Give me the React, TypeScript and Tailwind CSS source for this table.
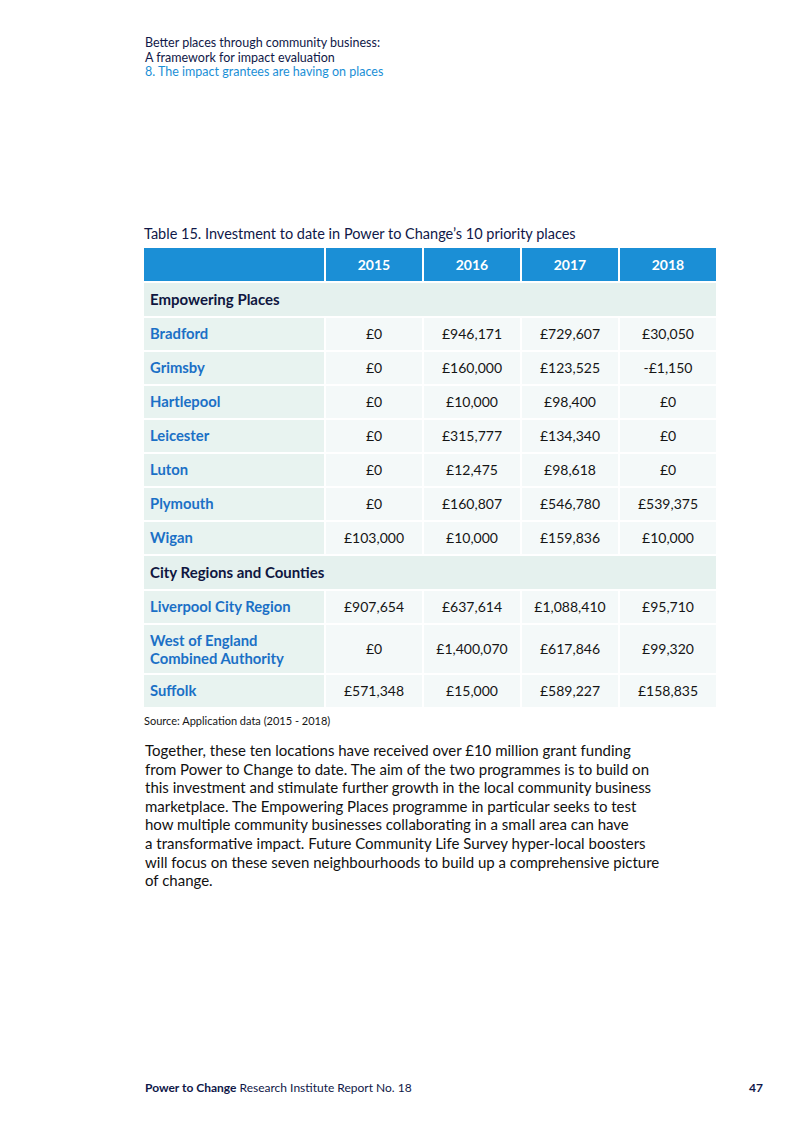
import React from 'react';

// ─── Data ────────────────────────────────────────────────────────────────────

type Row = { place: string; values: string[]; tall?: boolean };
type Group = { label: string; rows: Row[] };

const YEARS = ['2015', '2016', '2017', '2018'];

const GROUPS: Group[] = [
  {
    label: 'Empowering Places',
    rows: [
      { place: 'Bradford', values: ['£0', '£946,171', '£729,607', '£30,050'] },
      { place: 'Grimsby', values: ['£0', '£160,000', '£123,525', '-£1,150'] },
      { place: 'Hartlepool', values: ['£0', '£10,000', '£98,400', '£0'] },
      { place: 'Leicester', values: ['£0', '£315,777', '£134,340', '£0'] },
      { place: 'Luton', values: ['£0', '£12,475', '£98,618', '£0'] },
      { place: 'Plymouth', values: ['£0', '£160,807', '£546,780', '£539,375'] },
      { place: 'Wigan', values: ['£103,000', '£10,000', '£159,836', '£10,000'] },
    ],
  },
  {
    label: 'City Regions and Counties',
    rows: [
      { place: 'Liverpool City Region', values: ['£907,654', '£637,614', '£1,088,410', '£95,710'] },
      {
        place: 'West of England Combined Authority',
        values: ['£0', '£1,400,070', '£617,846', '£99,320'],
        tall: true,
      },
      { place: 'Suffolk', values: ['£571,348', '£15,000', '£589,227', '£158,835'] },
    ],
  },
];

// Body copy, broken where the printed page breaks it
const BODY_LINES = [
  'Together, these ten locations have received over £10 million grant funding',
  'from Power to Change to date. The aim of the two programmes is to build on',
  'this investment and stimulate further growth in the local community business',
  'marketplace. The Empowering Places programme in particular seeks to test',
  'how multiple community businesses collaborating in a small area can have',
  'a transformative impact. Future Community Life Survey hyper-local boosters',
  'will focus on these seven neighbourhoods to build up a comprehensive picture',
  'of change.',
];

const FONT = "font-['Lato','Noto_Sans',sans-serif]";

// ─── Table ───────────────────────────────────────────────────────────────────

function InvestmentTable() {
  return (
    <div className="grid grid-cols-[180px_repeat(4,96px)] gap-[2px] bg-white">
      {/* Header row */}
      <div className="h-[33px] bg-[#1b8fd6]" />
      {YEARS.map((y) => (
        <div
          key={y}
          className="h-[33px] bg-[#1b8fd6] flex items-center justify-center text-white font-bold text-[14px]"
        >
          {y}
        </div>
      ))}

      {GROUPS.map((group) => (
        <React.Fragment key={group.label}>
          <div className="col-span-5 h-[33px] bg-[#e5f1ee] flex items-center px-[6px] text-[#0f1640] font-bold text-[15px]">
            {group.label}
          </div>
          {group.rows.map((row) => (
            <React.Fragment key={row.place}>
              <div
                className={`${row.tall ? 'h-[48px] leading-[18px]' : 'h-[32px]'} bg-[#e8f3f0] flex items-center px-[6px] text-[#1b70c6] font-bold text-[14.8px]`}
              >
                <span className={row.tall ? 'max-w-[150px]' : ''}>{row.place}</span>
              </div>
              {row.values.map((v, i) => (
                <div
                  key={i}
                  className={`${row.tall ? 'h-[48px]' : 'h-[32px]'} bg-[#f4f9f9] flex items-center justify-center text-[#151515] text-[14px]`}
                >
                  {v}
                </div>
              ))}
            </React.Fragment>
          ))}
        </React.Fragment>
      ))}
    </div>
  );
}

// ─── Page ────────────────────────────────────────────────────────────────────

export default function App() {
  return (
    <div className={`w-[800px] h-[1132px] bg-white flex flex-col ${FONT}`}>
      {/* Running header */}
      <div className="pl-[145px] pt-[36px] text-[12.5px] leading-[14.5px]">
        <div className="text-[#101848]">Better places through community business:</div>
        <div className="text-[#101848]">A framework for impact evaluation</div>
        <div className="text-[#1b8fd6]">8. The impact grantees are having on places</div>
      </div>

      {/* Table block */}
      <div className="pl-[144px] pt-[145px]">
        <div className="text-[14.5px] text-[#101848] leading-[18px] mb-[5px]">
          Table 15. Investment to date in Power to Change’s 10 priority places
        </div>
        <InvestmentTable />
        <div className="text-[11px] text-[#151515] mt-[6px]">Source: Application data (2015 - 2018)</div>
      </div>

      {/* Body copy */}
      <p className="pl-[145px] pt-[12px] text-[15px] leading-[18.6px] text-[#111111] whitespace-nowrap">
        {BODY_LINES.map((line, i) => (
          <React.Fragment key={i}>
            {line}
            {i < BODY_LINES.length - 1 && <br />}
          </React.Fragment>
        ))}
      </p>

      {/* Footer */}
      <div className="mt-auto mb-[35px] pl-[145px] pr-[37px] flex justify-between items-center text-[12px] text-[#101848]">
        <div>
          <span className="font-bold">Power to Change</span> Research Institute Report No. 18
        </div>
        <div className="font-bold">47</div>
      </div>
    </div>
  );
}
